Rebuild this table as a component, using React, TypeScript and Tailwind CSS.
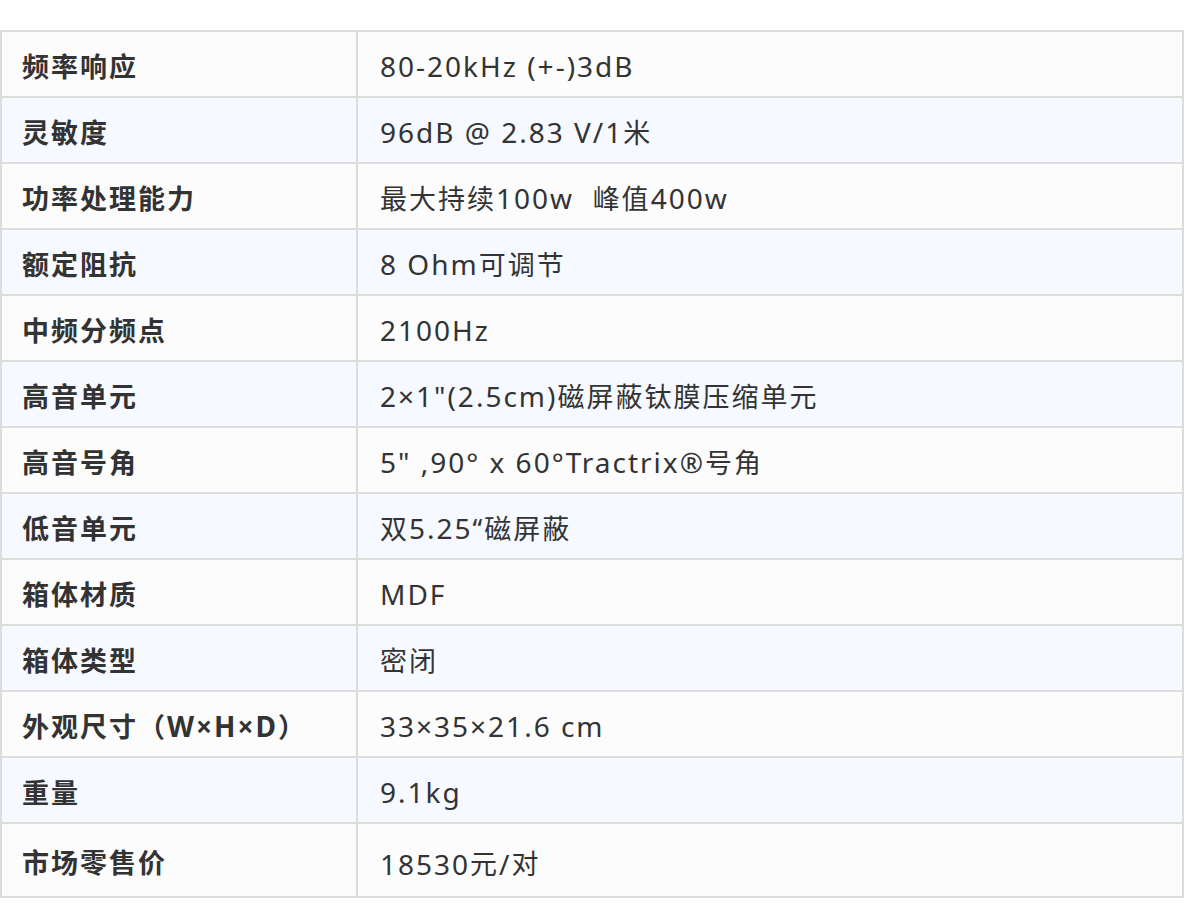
import React from "react";

const rows: [string, string][] = [
  ["频率响应", "80-20kHz (+-)3dB"],
  ["灵敏度", "96dB @ 2.83 V/1米"],
  ["功率处理能力", "最大持续100w  峰值400w"],
  ["额定阻抗", "8 Ohm可调节"],
  ["中频分频点", "2100Hz"],
  ["高音单元", "2×1\"(2.5cm)磁屏蔽钛膜压缩单元"],
  ["高音号角", "5\" ,90° x 60°Tractrix®号角"],
  ["低音单元", "双5.25“磁屏蔽"],
  ["箱体材质", "MDF"],
  ["箱体类型", "密闭"],
  ["外观尺寸（W×H×D）", "33×35×21.6 cm"],
  ["重量", "9.1kg"],
  ["市场零售价", "18530元/对"],
];

const isCjk = (c: string) => /[\u3000-\u9fff\uff00-\uffef\u201c]/.test(c);

function Mixed({ text }: { text: string }) {
  const parts: { cjk: boolean; s: string }[] = [];
  for (const ch of Array.from(text)) {
    const c = isCjk(ch);
    const last = parts[parts.length - 1];
    if (last && last.cjk === c) last.s += ch;
    else parts.push({ cjk: c, s: ch });
  }
  return (
    <>
      {parts.map((p, i) =>
        p.cjk ? (
          <span key={i} className="text-[27px]">
            {p.s}
          </span>
        ) : (
          <span key={i}>{p.s}</span>
        )
      )}
    </>
  );
}

export default function App() {
  return (
    <div
      className="w-[1186px] h-[903px] bg-white pt-[30px] text-[#333333]"
      style={{ fontFamily: '"Noto Sans", "Noto Sans CJK SC", sans-serif' }}
    >
      <div className="w-[1184px] border-2 border-[#dcdcdc]">
        {rows.map(([k, v], i) => {
          const last = i === rows.length - 1;
          return (
            <div
              key={k}
              className={`flex ${last ? "h-[72px]" : "h-[66px] border-b-2 border-[#dcdcdc]"} ${
                i % 2 === 1 ? "bg-[#f6f9ff]" : "bg-[#fcfcfc]"
              }`}
            >
              <div className="w-[356px] shrink-0 border-r-2 border-[#dcdcdc] pl-[20px] pt-[4px] flex items-center font-bold text-[28px] tracking-[2px] whitespace-pre leading-none">
                <Mixed text={k} />
              </div>
              <div
                className={`flex-1 pl-[22px] flex items-center text-[28px] tracking-[2px] whitespace-pre leading-none ${
                  last ? "pt-[7px]" : "pt-[4px]"
                }`}
              >
                <Mixed text={v} />
              </div>
            </div>
          );
        })}
      </div>
    </div>
  );
}
